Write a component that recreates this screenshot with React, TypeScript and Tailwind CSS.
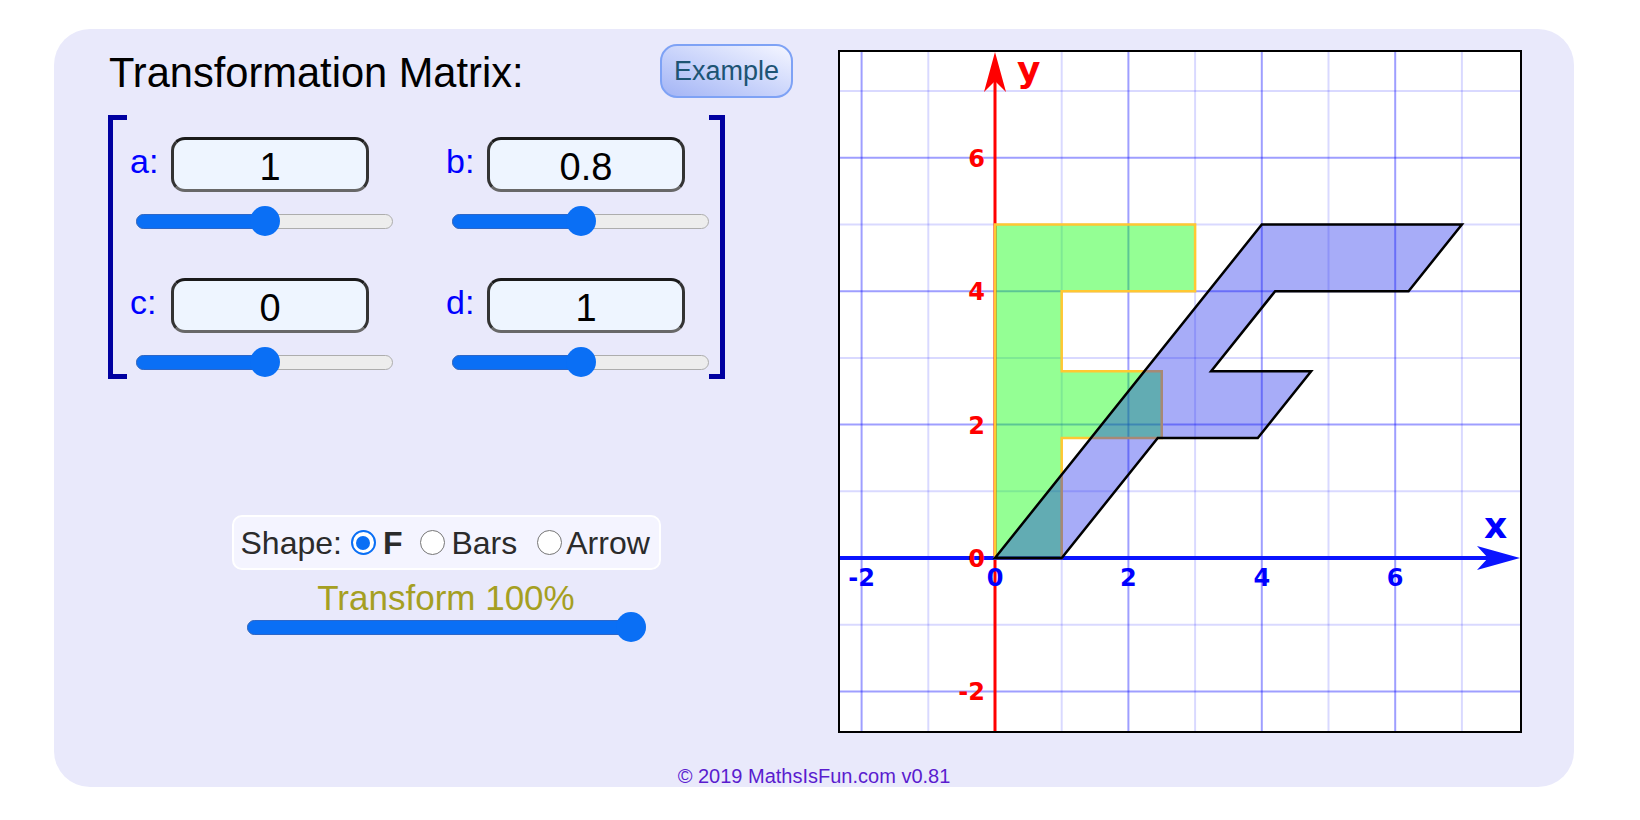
import React from 'react'

const U = 66.7
const OX = 155
const OY = 506

const px = (x: number) => OX + U * x
const py = (y: number) => OY - U * y

// original F and the sheared copy (matrix [[1, 0.8], [0, 1]])
const shapeF: [number, number][] = [
  [0, 0], [0, 5], [3, 5], [3, 4], [1, 4], [1, 2.8], [2.5, 2.8], [2.5, 1.8], [1, 1.8], [1, 0],
]
const mat = { a: 1, b: 0.8, c: 0, d: 1 }
const sheared = shapeF.map(([x, y]) => [mat.a * x + mat.b * y, mat.c * x + mat.d * y] as [number, number])

const pts = (list: [number, number][]) => list.map(([x, y]) => `${px(x)},${py(y)}`).join(' ')

function Slider({ w, f }: { w: number; f: number }) {
  const left = (w - 30) * f
  return (
    <div className="relative h-[30px] flex items-center" style={{ width: w }}>
      <div className="relative h-[15px] w-full rounded-full bg-[#ededed] border border-[#adadad]">
        <div
          className="absolute -inset-y-px -left-px rounded-full bg-[#0a6ff5] border border-[#2d67c8]"
          style={{ width: left + 16 }}
        />
      </div>
      <div className="absolute top-0 h-[30px] w-[30px] rounded-full bg-[#0a6ff5]" style={{ left }} />
    </div>
  )
}

function Cell({ label, value }: { label: string; value: string }) {
  return (
    <div className="flex flex-col">
      <div className="flex items-start">
        <span className="w-[28px] mt-[7px] text-[34px] leading-none text-[#0000ff]">{label}</span>
        <div className="ml-[13px] w-[198px] h-[55px] rounded-[14px] border-[3px] border-[#333] border-t-[#1a1a1a] border-b-[#686868] bg-[#eef5ff] flex items-center justify-center pt-[4px] text-[38px] leading-none text-black">
          {value}
        </div>
      </div>
      <div className="mt-[14px] ml-[6px]">
        <Slider w={257} f={0.5} />
      </div>
    </div>
  )
}

function Radio({ on }: { on?: boolean }) {
  if (on) {
    return (
      <span className="flex w-[25px] h-[25px] rounded-full border-[2.5px] border-[#0a6ff5] bg-white items-center justify-center">
        <span className="block w-[14px] h-[14px] rounded-full bg-[#0a6ff5]" />
      </span>
    )
  }
  return <span className="block w-[25px] h-[25px] rounded-full border-[1.5px] border-[#767676] bg-white" />
}

function Graph() {
  const lines = [-2, -1, 1, 2, 3, 4, 5, 6, 7]
  const ticks = [-2, 0, 2, 4, 6]
  return (
    <svg width="680" height="679" className="block overflow-visible">
      {lines.map((i) => (
        <line
          key={'v' + i}
          x1={px(i)} x2={px(i)} y1={0} y2={679}
          stroke={i % 2 === 0 ? 'rgba(0,0,255,0.38)' : 'rgba(0,0,255,0.15)'}
          strokeWidth={2}
        />
      ))}
      {lines.map((i) => (
        <line
          key={'h' + i}
          y1={py(i)} y2={py(i)} x1={0} x2={680}
          stroke={i % 2 === 0 ? 'rgba(0,0,255,0.38)' : 'rgba(0,0,255,0.15)'}
          strokeWidth={2}
        />
      ))}

      {/* axes */}
      <line x1={OX} x2={OX} y1={679} y2={20} stroke="#ff0000" strokeWidth={3} />
      <polygon points={`${OX},0 ${OX - 11},40 ${OX},29 ${OX + 11},40`} fill="#ff0000" />
      <line x1={0} x2={660} y1={OY} y2={OY} stroke="#0a14ff" strokeWidth={4} />
      <polygon points={`680,${OY} 637,${OY - 12} 648,${OY} 637,${OY + 12}`} fill="#0a14ff" />

      {/* shapes */}
      <polygon points={pts(shapeF)} fill="rgba(0,255,0,0.42)" stroke="#ffc832" strokeWidth={2.5} />
      <polygon points={pts(sheared)} fill="rgba(10,25,235,0.36)" stroke="#000" strokeWidth={2.5} />

      {/* labels */}
      <g fontFamily="'DejaVu Sans', sans-serif" fontWeight="bold" fontSize="24">
        {ticks.map((v) => (
          <text key={'x' + v} x={px(v)} y={OY + 28} textAnchor="middle" fill="#0000ff">
            {v}
          </text>
        ))}
        {ticks.map((v) => (
          <text key={'y' + v} x={145} y={py(v) + 9} textAnchor="end" fill="#ff0000">
            {v}
          </text>
        ))}
      </g>
      <text x={177} y={30} fontFamily="'DejaVu Sans', sans-serif" fontWeight="bold" fontSize="36" fill="#ff0000">
        y
      </text>
      <text x={644} y={486} fontFamily="'DejaVu Sans', sans-serif" fontWeight="bold" fontSize="36" fill="#0000ff">
        x
      </text>
    </svg>
  )
}

export default function App() {
  return (
    <div className="min-h-screen bg-white pt-[29px] pl-[54px] font-['Liberation_Sans',Arial,sans-serif]">
      <div className="w-[1520px] h-[758px] rounded-[36px] bg-[#e9e9fb] flex flex-col">
        <div className="flex">
          {/* Controls */}
          <div className="w-[784px] flex flex-col">
            <div className="flex items-start justify-between pl-[55px] pr-[45px] pt-[15px]">
              <h1 className="mt-[8px] text-[41.6px] leading-none text-black">Transformation Matrix:</h1>
              <button className="w-[133px] h-[54px] rounded-[17px] border-2 border-[#7ea2f5] bg-linear-to-tr from-[#a3b4f5] to-[#f5f6ff] text-[27px] leading-none text-[#1d5474] flex items-center justify-center">
                Example
              </button>
            </div>

            <div className="flex ml-[54px] mt-[17px]">
              <div className="w-[19px] border-l-[5px] border-y-[5px] border-[#0000a0]" />
              <div className="w-[582px] grid grid-cols-[316px_263px] gap-y-[42px] pt-[22px] pb-[2px] pl-[3px]">
                <Cell label="a:" value="1" />
                <Cell label="b:" value="0.8" />
                <Cell label="c:" value="0" />
                <Cell label="d:" value="1" />
              </div>
              <div className="w-[16px] border-r-[5px] border-y-[5px] border-[#0000a0]" />
            </div>

            <div className="mt-[136px] mx-auto w-[429px] h-[55px] rounded-[10px] border-2 border-white bg-[#f4f4ff] flex items-center pl-[7px] text-[32px] leading-none text-[#2b2b2b]">
              <span>Shape:</span>
              <span className="ml-[9px]"><Radio on /></span>
              <span className="ml-[7px] font-bold">F</span>
              <span className="ml-[18px]"><Radio /></span>
              <span className="ml-[6px]">Bars</span>
              <span className="ml-[20px]"><Radio /></span>
              <span className="ml-[4px]">Arrow</span>
            </div>

            <div className="mt-[10px] text-center text-[35px] leading-none text-[#a59f22]">Transform 100%</div>
            <div className="-mt-[3px] mx-auto">
              <Slider w={399} f={1} />
            </div>
          </div>

          {/* Graph */}
          <div className="mt-[21px] w-[684px] h-[683px] border-2 border-black bg-white">
            <Graph />
          </div>
        </div>

        <p className="mt-[33px] text-center text-[20px] leading-none text-[#5a1ccf]">© 2019 MathsIsFun.com v0.81</p>
      </div>
    </div>
  )
}
